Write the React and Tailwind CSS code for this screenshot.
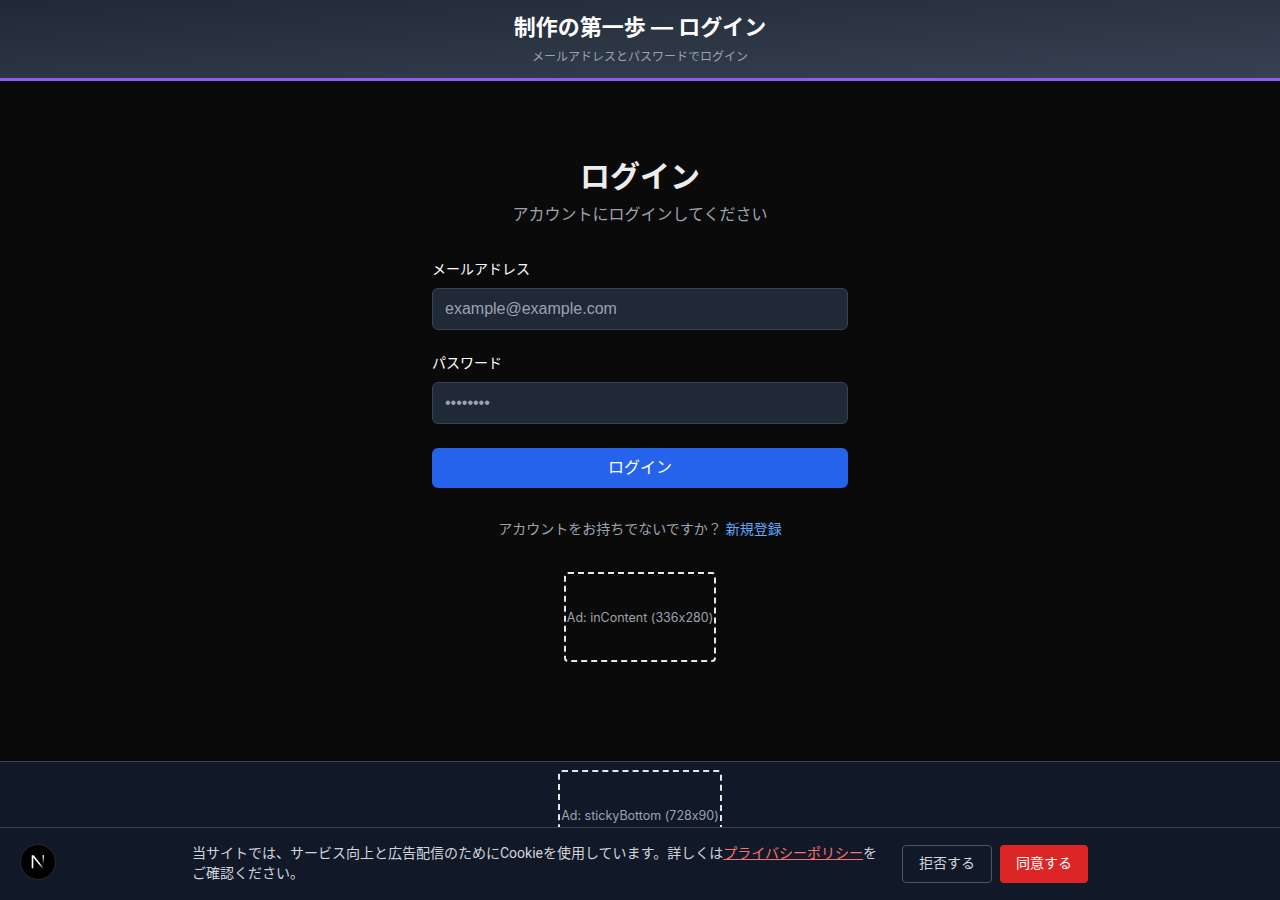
export default function App() {
  return (
    <div className="relative h-[900px] overflow-hidden flex flex-col bg-[#0a0a0a] text-[#ededed] font-['Inter','Noto_Sans_CJK_JP',sans-serif]">
      <header className="h-[81px] shrink-0 border-b-[3px] border-[#8b5cf6] bg-gradient-to-br from-[#1f2937] to-[#374151] flex flex-col items-center pt-[11px]">
        <h1 className="text-[22px] leading-[32px] font-bold text-white">制作の第一歩 — ログイン</h1>
        <p className="mt-[4px] text-xs leading-5 text-[#9ca3af]">メールアドレスとパスワードでログイン</p>
      </header>

      <main className="flex-1 flex flex-col items-center pt-[72px]">
        <h2 className="text-3xl leading-[46px] font-bold">ログイン</h2>
        <p className="mt-[3px] text-base leading-6 text-[#9ca3af]">アカウントにログインしてください</p>

        <form className="w-[416px] mt-8 flex flex-col">
          <label className="text-sm leading-5 text-white mb-[9px] mt-[1px]">メールアドレス</label>
          <input readOnly placeholder="example@example.com" className="h-[42px] rounded-md border border-[#374151] bg-[#1f2937] px-3 font-['Liberation_Sans',sans-serif] text-base text-[#9ca3af] placeholder:text-[#9ca3af] outline-none" />
          <label className="text-sm leading-5 text-white mb-[9px] mt-[23px]">パスワード</label>
          <input readOnly type="password" value="password" className="h-[42px] rounded-md border border-[#374151] bg-[#1f2937] px-3 font-['Liberation_Sans',sans-serif] text-base text-[#9ca3af] outline-none" />
          <button type="button" className="mt-6 h-10 pb-[2px] rounded-md bg-[#2563eb] text-white text-base">ログイン</button>
        </form>

        <p className="mt-[31px] text-sm leading-5 text-[#9ca3af]">アカウントをお持ちでないですか？ <a className="text-[#60a5fa]">新規登録</a></p>

        <div className="mt-[33px] w-[152px] h-[90px] pt-[2px] rounded border-2 border-dashed border-[#e5e7eb] flex items-center justify-center text-[12.5px] [font-feature-settings:'calt'_0] text-[#9ca3af] whitespace-nowrap">Ad: inContent (336x280)</div>
      </main>

      <footer className="h-[139px] shrink-0 border-t border-[#374151] bg-[#111827] flex justify-center pt-2">
        <div className="w-[164px] h-[90px] pt-[2px] rounded border-2 border-dashed border-[#e5e7eb] flex items-center justify-center text-[12.5px] [font-feature-settings:'calt'_0] text-[#9ca3af] whitespace-nowrap">Ad: stickyBottom (728x90)</div>
      </footer>

      <div className="absolute left-0 right-0 bottom-0 h-[73px] border-t border-[#374151] bg-[#111827] flex items-center justify-center gap-4">
        <p className="w-[694px] mb-[2px] font-['Roboto','Noto_Sans_CJK_JP',sans-serif] text-sm leading-5 text-[#d1d5db]">当サイトでは、サービス向上と広告配信のためにCookieを使用しています。詳しくは<a className="text-[#f87171] underline">プライバシーポリシー</a>をご確認ください。</p>
        <div className="flex gap-2">
          <button type="button" className="h-[38px] w-[90px] pb-[2px] rounded border border-[#4b5563] text-sm text-[#d1d5db]">拒否する</button>
          <button type="button" className="h-[38px] w-[88px] pb-[2px] rounded bg-[#dc2626] text-sm text-white">同意する</button>
        </div>
      </div>

      <div className="absolute left-5 bottom-5 w-9 h-9 rounded-full bg-black border border-[#2a2a2a] flex items-center justify-center">
        <svg width="16" height="16" viewBox="0 0 14 14" fill="none">
          <defs>
            <linearGradient id="nb" x1="11.5" y1="1" x2="11.5" y2="9" gradientUnits="userSpaceOnUse">
              <stop stopColor="white" />
              <stop offset="1" stopColor="white" stopOpacity="0" />
            </linearGradient>
            <linearGradient id="nd" x1="3" y1="1" x2="12" y2="13" gradientUnits="userSpaceOnUse">
              <stop offset="0.6" stopColor="white" />
              <stop offset="1" stopColor="white" stopOpacity="0" />
            </linearGradient>
          </defs>
          <path d="M1.5 1H3.2L12.5 13H10.9L2.9 3V12.5H1.5V1Z" fill="url(#nd)" />
          <rect x="11" y="1" width="1.3" height="8" fill="url(#nb)" />
        </svg>
      </div>
    </div>
  );
}
